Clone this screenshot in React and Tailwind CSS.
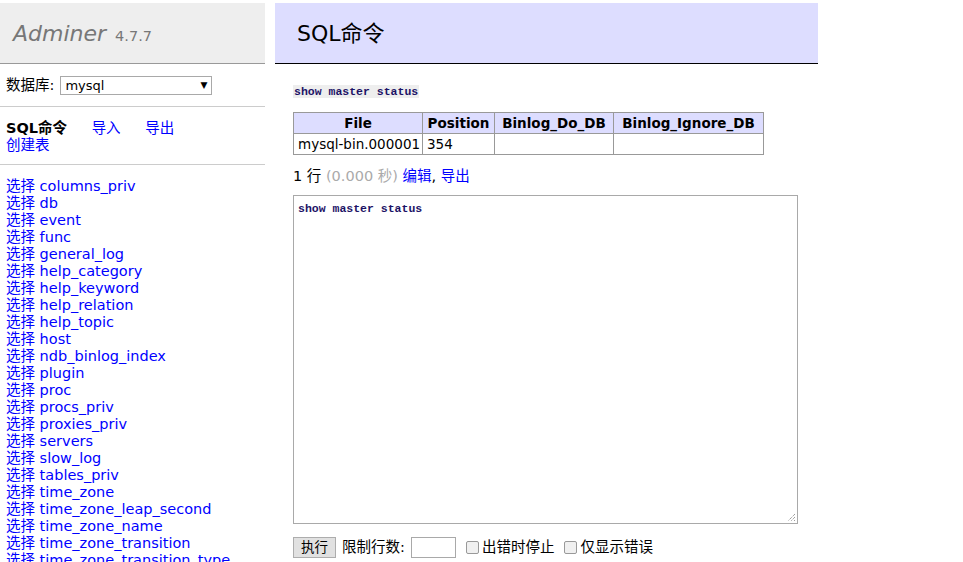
import React from "react";

const tables = [
  "columns_priv","db","event","func","general_log","help_category","help_keyword","help_relation","help_topic","host","ndb_binlog_index","plugin","proc","procs_priv","proxies_priv","servers","slow_log","tables_priv","time_zone","time_zone_leap_second","time_zone_name","time_zone_transition","time_zone_transition_type","user",
];

export default function App() {
  return (
    <div className="h-[562px] w-[963px] overflow-hidden bg-white text-[14.5px] leading-[17px] text-black font-['DejaVu_Sans','Noto_Sans_CJK_SC',sans-serif]">
      <div className="flex pt-[3px]">
        {/* Sidebar */}
        <div className="w-[265px] shrink-0">
          <div className="h-[61px] bg-[#eee] border-b border-[#999] flex items-center pl-[13px] pt-[2px]">
            <span className="italic text-[22px] text-[#777] leading-none">Adminer</span>
            <span className="ml-[9px] text-[14.5px] text-[#777] leading-none mt-[5px]">4.7.7</span>
          </div>
          <div className="h-[43px] border-b border-[#ccc] flex items-center pl-[6px]">
            <span>数据库:</span>
            <div className="ml-[6px] w-[152px] h-[19px] border border-[#a9a9a9] flex items-center justify-between px-[4px] text-[13px]">
              <span>mysql</span>
              <span className="text-[9px]">▼</span>
            </div>
          </div>
          <div className="pt-[13px] pb-[10px] pl-[6px] border-b border-[#ccc]">
            <div className="whitespace-nowrap">
              <span className="font-bold mr-[20px]">SQL命令</span>{" "}
              <span className="text-[#00f] mr-[20px]">导入</span>{" "}
              <span className="text-[#00f]">导出</span>
            </div>
            <div className="text-[#00f]">创建表</div>
          </div>
          <div className="pt-[13px] pl-[6px]">
            {tables.map((t) => (
              <div key={t} className="text-[#00f] whitespace-nowrap">
                选择 {t}
              </div>
            ))}
          </div>
        </div>

        {/* Content */}
        <div className="ml-[10px] flex-1">
          <div className="w-[543px] h-[61px] bg-[#ddf] border-b border-black flex items-center pl-[22px] pt-[2px]">
            <span className="text-[22px] leading-none">SQL命令</span>
          </div>
          <div className="pl-[18px]">
            <div className="mt-[21px] h-[13px] flex items-center">
              <code className="bg-[#eee] px-[1px] text-[11.5px] leading-[13px] font-bold text-[#1c1266] font-['Liberation_Mono',monospace] whitespace-nowrap">
                show master status
              </code>
            </div>
            <table className="mt-[14px] w-[470px] table-fixed border-collapse text-[13.5px] leading-[17px] whitespace-nowrap">
              <colgroup>
                <col className="w-[129px]" />
                <col className="w-[72px]" />
                <col className="w-[119px]" />
                <col className="w-[150px]" />
              </colgroup>
              <thead>
                <tr className="bg-[#ddf]">
                  <th className="border border-[#999] h-[21px] px-0 font-bold text-center">File</th>
                  <th className="border border-[#999] px-0 font-bold text-center">Position</th>
                  <th className="border border-[#999] px-0 font-bold text-center">Binlog_Do_DB</th>
                  <th className="border border-[#999] px-0 font-bold text-center">Binlog_Ignore_DB</th>
                </tr>
              </thead>
              <tbody>
                <tr>
                  <td className="border border-[#999] h-[21px] px-[4px]">mysql-bin.000001</td>
                  <td className="border border-[#999] px-[4px]">354</td>
                  <td className="border border-[#999] px-[4px]"></td>
                  <td className="border border-[#999] px-[4px]"></td>
                </tr>
              </tbody>
            </table>
            <div className="mt-[13px] leading-[17px]">
              1 行 <span className="text-[#aaa]">(0.000 秒)</span>{" "}
              <span className="text-[#00f]">编辑</span>, <span className="text-[#00f]">导出</span>
            </div>
            <div className="mt-[10px] w-[505px] h-[329px] border border-[#a9a9a9] relative px-[4px] pt-[3px]">
              <code className="text-[11.5px] leading-[13px] font-bold text-[#1c1266] font-['Liberation_Mono',monospace] whitespace-nowrap">
                show master status
              </code>
              <svg className="absolute right-[1px] bottom-[1px]" width="10" height="10" viewBox="0 0 10 10">
                <path d="M9 2 L2 9 M9 5 L5 9 M9 8 L8 9" stroke="#777" strokeWidth="1" strokeDasharray="1 1" />
              </svg>
            </div>
            <div className="mt-[13px] flex items-center h-[21px] whitespace-nowrap">
              <div className="w-[43px] h-[21px] border border-[#adadad] bg-[#e1e1e1] flex items-center justify-center text-[13.5px]">
                执行
              </div>
              <span className="ml-[6px]">限制行数:</span>
              <div className="ml-[6px] w-[45px] h-[21px] border border-[#a9a9a9] bg-white"></div>
              <div className="ml-[10px] w-[13px] h-[13px] border border-[#999] rounded-[2px] bg-[#f0f0f0]"></div>
              <span className="ml-[3px]">出错时停止</span>
              <div className="ml-[10px] w-[13px] h-[13px] border border-[#999] rounded-[2px] bg-[#f0f0f0]"></div>
              <span className="ml-[3px]">仅显示错误</span>
            </div>
          </div>
        </div>
      </div>
    </div>
  );
}
